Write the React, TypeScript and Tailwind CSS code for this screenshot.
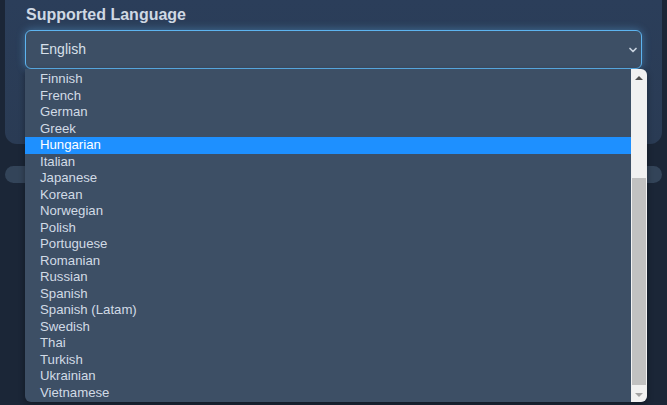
import { ChevronDown } from "lucide-react";

const LANGUAGES = [
  "Finnish",
  "French",
  "German",
  "Greek",
  "Hungarian",
  "Italian",
  "Japanese",
  "Korean",
  "Norwegian",
  "Polish",
  "Portuguese",
  "Romanian",
  "Russian",
  "Spanish",
  "Spanish (Latam)",
  "Swedish",
  "Thai",
  "Turkish",
  "Ukrainian",
  "Vietnamese",
];

const SELECTED = "Hungarian";

export default function App() {
  return (
    <div
      className="relative min-h-screen bg-[#1b2637] px-[5px]"
      style={{ fontFamily: '"Liberation Sans", Arial, sans-serif' }}
    >
      {/* settings card */}
      <div className="rounded-b-[12px] bg-gradient-to-b from-[#2b3e5a] to-[#2a3b54] px-[20px] pb-[21px] pt-[5px]">
        <label className="mb-[5px] block pl-[1px] text-[16px] font-bold leading-[20px] text-[#cfd8e3]">
          Supported Language
        </label>
        <div className="flex h-[39px] items-center justify-between rounded-[6px] border border-[#5db4ef] bg-[#3d4f65] pl-[14px] pr-[2px] shadow-[0_0_8px_rgba(96,180,240,0.45)]">
          <span className="text-[14px] text-[#d8e0ea]">English</span>
          <ChevronDown size={12} strokeWidth={3.5} className="text-[#c8d2de]" />
        </div>
        <div className="mt-[21px] h-[33px] rounded-[6px] border border-[#5db4ef] bg-[#3d4f65]" />
      </div>

      <div className="mt-[22px] h-[17px] rounded-full bg-[#334459]" />

      {/* open dropdown list */}
      <div className="absolute left-[25px] top-[69px] flex h-[333px] w-[622px] overflow-hidden rounded-b-[6px] rounded-tr-[6px] bg-[#3d4f65] shadow-[0_2px_6px_rgba(0,0,0,0.35)]">
        <ul className="flex-1 pt-[2px]">
          {LANGUAGES.map((lang) => (
            <li
              key={lang}
              className={`flex h-[16.5px] items-center pl-[15px] text-[13.2px] ${
                lang === SELECTED ? "bg-[#1e90ff] text-white" : "text-[#d2dbe6]"
              }`}
            >
              {lang}
            </li>
          ))}
        </ul>
        <div className="relative flex w-[16px] flex-col items-center bg-[#f1f1f1]">
          <div className="mt-[7px] h-0 w-0 border-x-[4px] border-b-[4px] border-x-transparent border-b-[#505050]" />
          <div className="absolute left-[1px] right-[1px] top-[109px] h-[207px] bg-[#c1c1c1]" />
          <div className="absolute bottom-[5px] h-0 w-0 border-x-[4px] border-t-[4px] border-x-transparent border-t-[#a3a3a3]" />
        </div>
      </div>
    </div>
  );
}
